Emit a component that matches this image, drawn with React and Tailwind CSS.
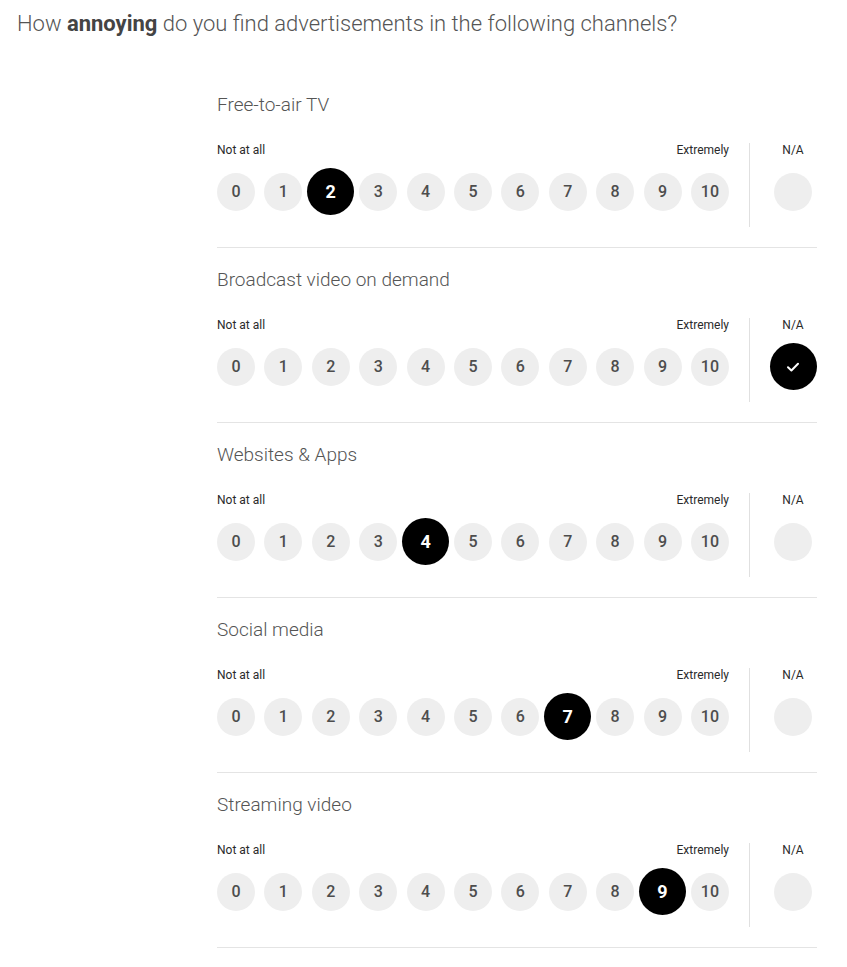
import React from "react";

const rows = [
  { title: "Free-to-air TV", sel: 2 },
  { title: "Broadcast video on demand", sel: "na" },
  { title: "Websites & Apps", sel: 4 },
  { title: "Social media", sel: 7 },
  { title: "Streaming video", sel: 9 },
];

const nums = [0, 1, 2, 3, 4, 5, 6, 7, 8, 9, 10];

function Circle({ n, selected }) {
  return (
    <div className="relative w-[38px] h-[38px]">
      {selected ? (
        <div className="absolute -inset-[4.5px] rounded-full bg-black text-white flex items-center justify-center text-[18px] font-bold">
          {n}
        </div>
      ) : (
        <div className="w-[38px] h-[38px] rounded-full bg-[#eeeeee] text-[#4d4d4d] flex items-center justify-center text-[16px] font-medium">
          {n}
        </div>
      )}
    </div>
  );
}

function Row({ title, sel }) {
  return (
    <div className="pt-[20px] border-b border-[#e4e4e4] pb-[19px]">
      <div className="text-[19px] leading-[24px] font-light text-[#555555]">{title}</div>
      <div className="mt-[25px] flex h-[86px]">
        <div className="w-[512px] flex flex-col">
          <div className="flex justify-between h-[14px] leading-[14px] text-[12px] font-normal text-[#2a2a2a] mt-[1px]">
            <span>Not at all</span>
            <span>Extremely</span>
          </div>
          <div className="mt-[11px] h-[47px] flex items-center justify-between">
            {nums.map((n) => (
              <Circle key={n} n={n} selected={sel === n} />
            ))}
          </div>
        </div>
        <div className="ml-[20px] w-px bg-[#e0e0e0] mt-[1px] mb-[1px]" />
        <div className="ml-[24px] w-[38px] flex flex-col items-center">
          <div className="h-[14px] leading-[14px] text-[12px] font-normal text-[#2a2a2a] mt-[1px]">N/A</div>
          <div className="mt-[11px] h-[47px] flex items-center">
            <div className="relative w-[38px] h-[38px]">
              {sel === "na" ? (
                <div className="absolute -inset-[4.5px] rounded-full bg-black flex items-center justify-center">
                  <svg width="16" height="16" viewBox="0 0 16 16" fill="none">
                    <path d="M3 8.3 L6.4 11.5 L13 4.8" stroke="white" strokeWidth="2" strokeLinecap="round" strokeLinejoin="round" />
                  </svg>
                </div>
              ) : (
                <div className="w-[38px] h-[38px] rounded-full bg-[#eeeeee]" />
              )}
            </div>
          </div>
        </div>
      </div>
    </div>
  );
}

export default function App() {
  return (
    <div className="w-[847px] min-h-[967px] bg-white" style={{ fontFamily: "Roboto, 'Liberation Sans', sans-serif" }}>
      <div className="pl-[17px] pt-[10px]">
        <div className="text-[22px] leading-[28px] font-light text-[#555555]">
          How <span className="font-bold text-[#444444]">annoying</span> do you find advertisements in the following channels?
        </div>
      </div>
      <div className="ml-[217px] w-[600px] mt-[35px]">
        {rows.map((r) => (
          <Row key={r.title} {...r} />
        ))}
      </div>
    </div>
  );
}
